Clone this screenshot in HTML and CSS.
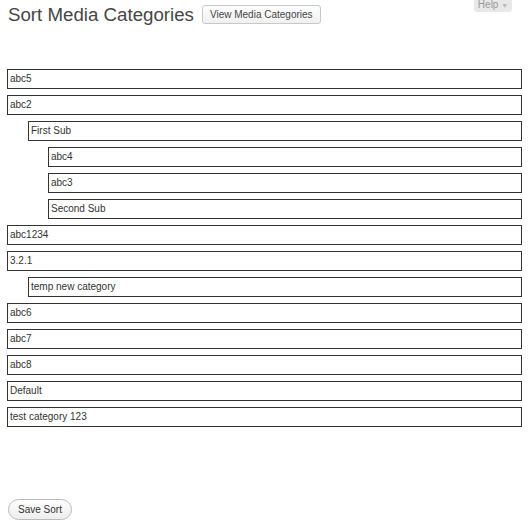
FILE: index.html
```html
<!DOCTYPE html>
<html lang="en">
<head>
    <meta charset="UTF-8">
    <meta name="viewport" content="width=device-width, initial-scale=1.0">
    <link rel="stylesheet" href="styles.css">
</head>
<body>
    <!-- Help tab in the top corner -->
    <div class="help-tab">Help <span class="arrow">&#9660;</span></div>

    <div class="wrap">
        <div class="header">
            <h2>Sort Media Categories</h2>
            <button class="button" id="viewCategories">View Media Categories</button>
        </div>

        <!-- Sortable category tree -->
        <ul class="sort-list">
            <li class="item">abc5</li>
            <li class="item">abc2</li>
            <li class="item level-1">First Sub</li>
            <li class="item level-2">abc4</li>
            <li class="item level-2">abc3</li>
            <li class="item level-2">Second Sub</li>
            <li class="item">abc1234</li>
            <li class="item">3.2.1</li>
            <li class="item level-1">temp new category</li>
            <li class="item">abc6</li>
            <li class="item">abc7</li>
            <li class="item">abc8</li>
            <li class="item">Default</li>
            <li class="item">test category 123</li>
        </ul>

        <button class="save-button" id="saveSort">Save Sort</button>
    </div>
</body>
</html>
```

FILE: styles.css
```css
body {
    margin: 0;
    background: #fff;
    font-family: "Liberation Sans", Arial, sans-serif;
    color: #333;
}
.wrap {
    padding: 0 8px 0 7px;
}
.header {
    display: flex;
    align-items: center;
    height: 30px;
}
h2 {
    margin: 0 8px 0 1px;
    font-size: 18.7px;
    font-weight: normal;
    color: #464646;
}
.button {
    font-family: "Liberation Sans", Arial, sans-serif;
    font-size: 10px;
    color: #464646;
    padding: 0 7px;
    height: 19px;
    margin-top: -1px;
    background: linear-gradient(#fefefe, #f0f0f0);
    border: 1px solid #c8c8c8;
    border-radius: 3px;
}
.help-tab {
    position: absolute;
    top: 0;
    right: 18px;
    width: 38px;
    height: 12px;
    font-size: 10px;
    line-height: 10px;
    color: #999;
    background: #e8e8e8;
    border-radius: 0 0 3px 3px;
    text-align: center;
}
.help-tab .arrow {
    font-size: 7px;
    color: #bbb;
}
.sort-list {
    list-style: none;
    margin: 39px 0 0;
    padding: 0;
}
.item {
    height: 18px;
    line-height: 18px;
    border: 1px solid #333;
    margin-bottom: 6px;
    padding-left: 2px;
    font-size: 10px;
    color: #333;
    background: #fff;
}
.level-1 {
    margin-left: 21px;
}
.level-2 {
    margin-left: 41px;
}
.save-button {
    margin: 66px 0 0 1px;
    font-family: "Liberation Sans", Arial, sans-serif;
    font-size: 10px;
    color: #333;
    height: 21px;
    padding: 0 9px;
    background: linear-gradient(#fefefe, #eee);
    border: 1px solid #bbb;
    border-radius: 11px;
}
```
